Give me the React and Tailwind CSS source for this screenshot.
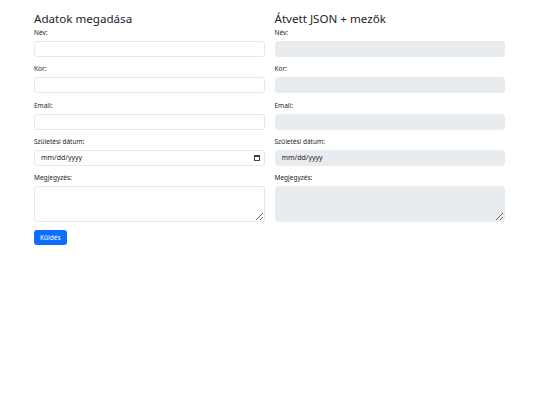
import React from 'react';

const fields = [
  { id: 'nev', label: 'Név:' },
  { id: 'kor', label: 'Kor:' },
  { id: 'email', label: 'Email:' },
  { id: 'szuletes', label: 'Születési dátum:', date: true },
];

const inputBase =
  'block w-full h-[16px] px-[6px] text-[7px] text-[#212529] border rounded-[3px] outline-none';

// kis naptár ikon a dátum mezőhöz
const CalendarIcon = () => (
  <svg width="6" height="6" viewBox="0 0 6 6" className="absolute right-[5px] top-[5px]">
    <rect x="0.5" y="0.5" width="5" height="5" fill="none" stroke="#333" strokeWidth="0.9" />
    <rect x="0.5" y="0.5" width="5" height="1.4" fill="#333" />
  </svg>
);

const FormColumn = ({ title, disabled, withButton }) => (
  <div>
    <h3 className="text-[11.6px] leading-[14px] text-[#212529] mb-[2px]">{title}</h3>
    {fields.map(f => (
      <div key={f.id} className="mb-[7.25px]">
        <label className="block text-[6.5px] leading-[9px] text-[#212529] mb-[4px]">{f.label}</label>
        <div className="relative">
          <input
            type="text"
            readOnly={f.date}
            disabled={disabled}
            defaultValue={f.date ? 'mm/dd/yyyy' : ''}
            className={`${inputBase} ${disabled ? 'bg-[#e9ecef] border-[#e9ecef]' : 'bg-white border-[#e6e8eb]'}`}
          />
          {f.date && !disabled && <CalendarIcon />}
        </div>
      </div>
    ))}
    <div className="mb-[8px]">
      <label className="block text-[6.5px] leading-[9px] text-[#212529] mb-[4px]">Megjegyzés:</label>
      <textarea
        disabled={disabled}
        className={`block w-full h-[36px] px-[6px] py-[3px] text-[7px] border rounded-[3px] outline-none ${disabled ? 'bg-[#e9ecef] border-[#e9ecef]' : 'bg-white border-[#e6e8eb]'}`}
      />
    </div>
    {withButton && (
      <div>
        <button className="block h-[15px] px-[6px] text-[6.5px] leading-[15px] text-white bg-[#0d6efd] rounded-[3px]">Küldés</button>
      </div>
    )}
  </div>
);

export default function App() {
  return (
    <div className="bg-white min-h-[405px] pt-[12px]" style={{ fontFamily: '"Noto Sans", sans-serif' }}>
      <div className="w-[471px] ml-[34px] grid grid-cols-2 gap-[10px]">
        <FormColumn title="Adatok megadása" withButton />
        <FormColumn title="Átvett JSON + mezők" disabled />
      </div>
    </div>
  );
}
